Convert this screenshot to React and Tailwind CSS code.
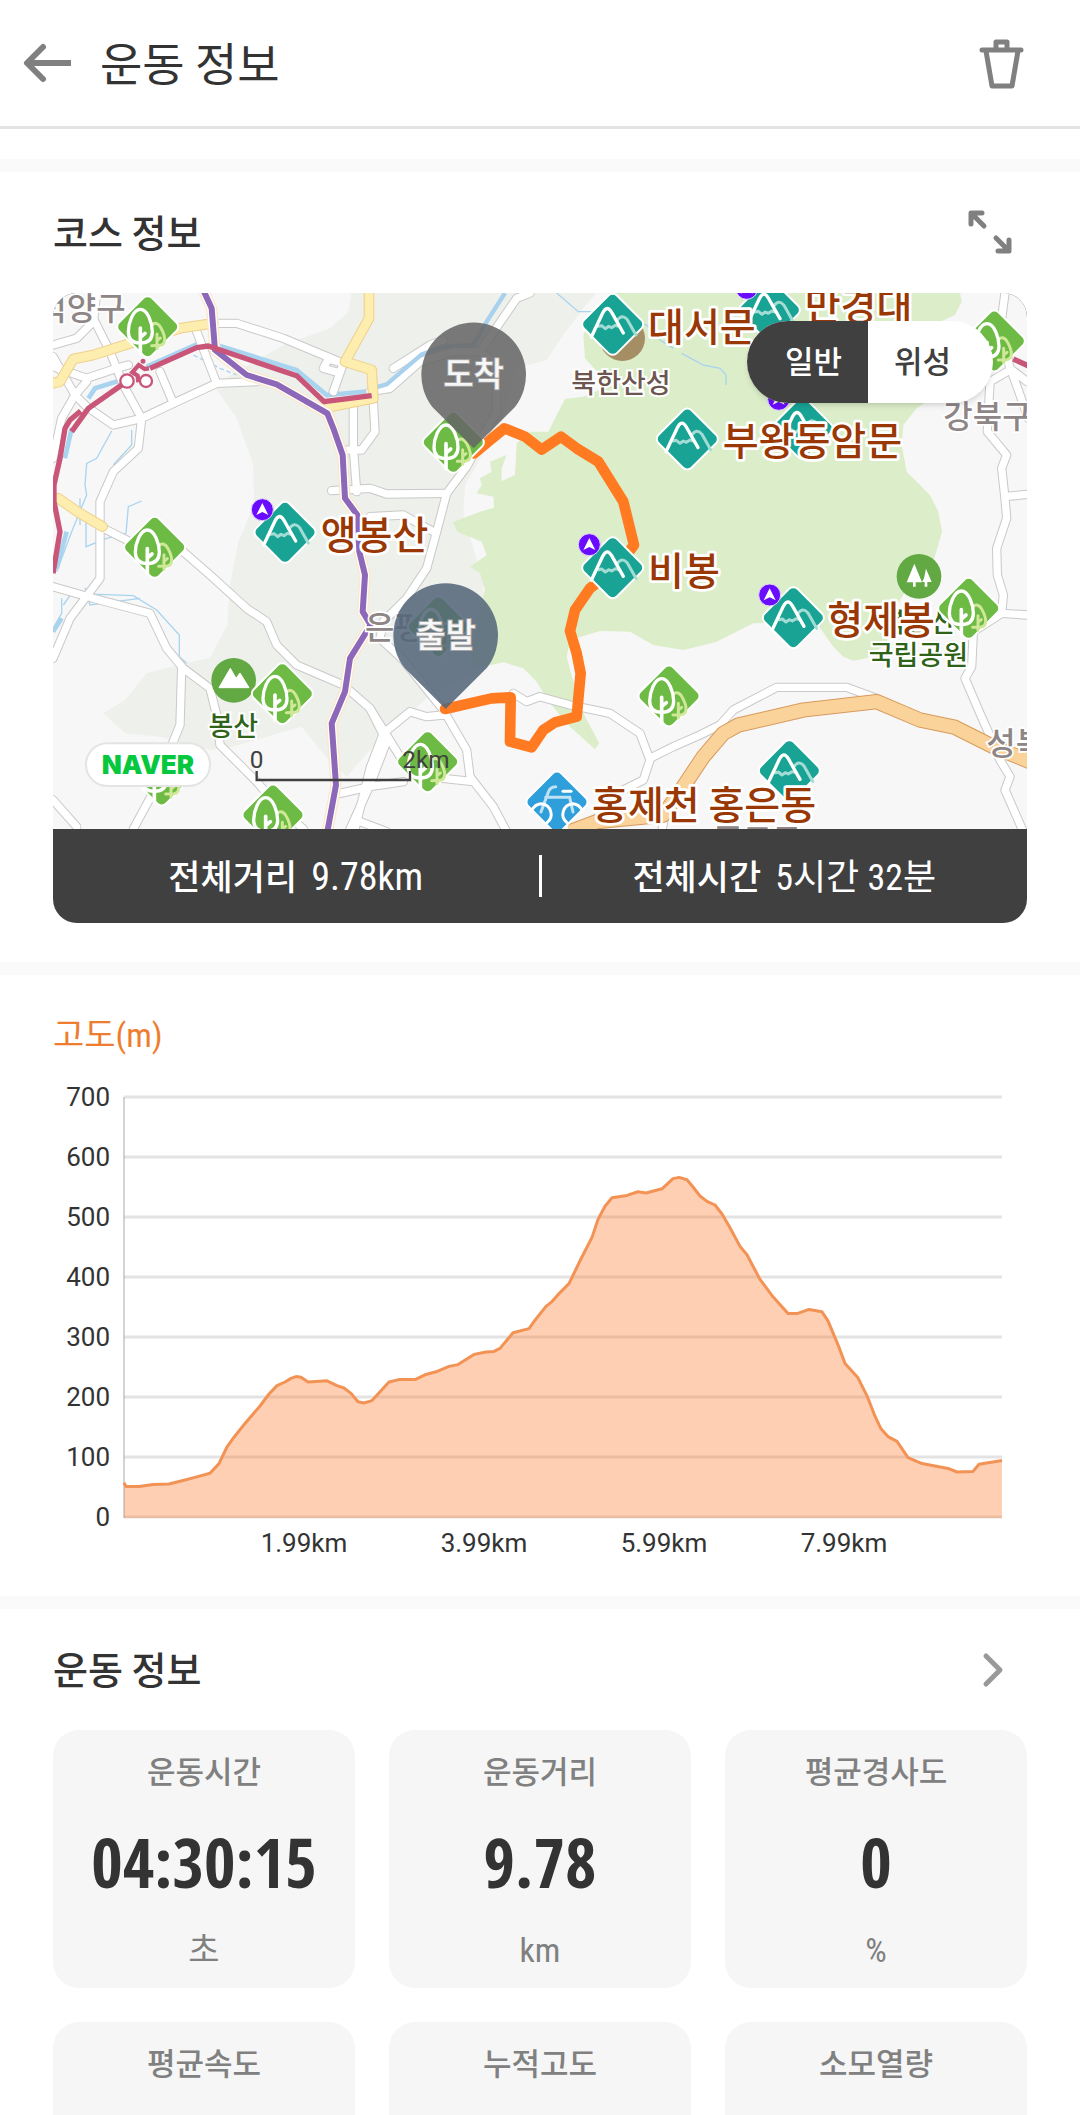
import { useState } from 'react';

const stats = [
  { label: '운동시간', value: '04:30:15', unit: '초' },
  { label: '운동거리', value: '9.78', unit: 'km' },
  { label: '평균경사도', value: '0', unit: '%' },
  { label: '평균속도' },
  { label: '누적고도' },
  { label: '소모열량' },
];

// [distance along the axis, elevation in m]
const elevation = [
  [0, 57], [2, 51], [15, 51], [29, 54], [45, 55], [57, 60], [71, 66], [86, 73], [95, 89], [103, 117],
  [110, 133], [121, 156], [136, 185], [145, 205], [153, 219], [161, 225], [167, 231], [172, 234],
  [177, 233], [184, 225], [203, 227], [213, 219], [220, 215], [227, 206], [234, 192], [240, 190],
  [248, 194], [265, 225], [275, 229], [291, 229], [301, 237], [312, 242], [325, 251], [334, 254],
  [350, 271], [362, 275], [370, 276], [376, 281], [389, 307], [405, 314], [411, 328], [422, 351],
  [428, 359], [436, 374], [445, 389], [456, 427], [468, 466], [474, 496], [481, 518], [488, 532],
  [503, 536], [514, 542], [522, 540], [538, 547], [549, 564], [555, 566], [563, 562], [569, 550],
  [576, 535], [583, 526], [591, 520], [598, 505], [606, 482], [616, 451], [623, 437], [629, 418],
  [636, 396], [649, 367], [664, 339], [673, 339], [685, 346], [698, 342], [704, 327], [714, 287],
  [721, 256], [734, 232], [743, 202], [751, 168], [757, 147], [764, 134], [773, 126], [784, 99],
  [798, 89], [824, 81], [833, 75], [849, 76], [855, 88], [878, 94],
];

const distances = ['1.99km', '3.99km', '5.99km', '7.99km'];

const roads = [
  'M9 180 L80 160 L130 110 L140 24',
  'M130 100 L180 200 L220 300 L275 400 L265 490 L190 560 L150 650 L150 880 L60 1000 L9 1120',
  'M9 215 L75 330 L110 365 L190 420 L275 400 L370 355 L500 295 L620 290',
  'M9 245 L110 280 L200 250 L235 240 M110 290 L75 330 L35 400 L9 520',
  'M370 355 L330 260 M500 295 L440 140',
  'M490 115 L560 115 L700 160 L880 235 L850 320 M880 235 L835 222 L820 250 L862 262',
  'M9 905 L130 940 L300 985 L350 1090 L400 1150 L480 1210 L500 1290 L510 1380 L620 1490 L680 1560 L760 1632',
  'M395 1150 L390 1320 L300 1540 L250 1632 M9 1545 L80 1625',
  'M160 730 L300 800 L400 800 L480 870 L590 970 L650 1010 L680 1080 L740 1140 L880 1200 L960 1270 L1010 1370 L960 1500 L900 1632',
  'M910 360 L910 490 L920 620 M970 350 L975 440 L935 495 L895 495 M845 617 L960 610 L1010 627 L1190 625',
  'M960 320 L1020 310 L1110 230 L1210 200 L1290 200 L1330 230 L1340 300 L1340 380 L1290 470 L1250 545 L1190 625 L1160 740 L1130 850 L1070 940 L1000 1010 L990 1060 L1060 1125 L1180 1275 L1250 1395 L1260 1475 L1330 1565 L1370 1640',
  'M1030 250 L1140 180 L1180 165 M1290 200 L1400 40 L1440 24',
  'M960 695 L1060 690 L1150 740',
  'M1180 1290 L1130 1295 L1080 1280 L1000 1345 L960 1450 L915 1632',
  'M960 1270 L1050 1415 L1130 1475 L1270 1490 M870 1525 L960 1505 L1060 1490 M930 1610 L1010 1640',
  'M1390 1225 L1430 1250 L1470 1235 L1560 1260 L1680 1285 L1770 1345 L1800 1425 L1780 1485 L1720 1515',
  'M1800 1420 L1870 1385 L1950 1350 L2010 1320 L2050 1275 L2180 1207 L2390 1207 L2480 1240',
  'M2865 24 L2855 100 L2880 255 L2820 290 L2812 440 L2870 510 L2855 550 L2865 640 L2870 700 L2840 790 L2842 870 L2860 930 L2855 985 L2770 1040 L2765 1145 L2745 1180 L2790 1285 L2830 1375 L2850 1425 L2880 1475 L2865 1515 L2920 1640',
  'M2880 250 L2931 290 M2885 260 L2935 400 M2865 635 L2931 628 M2855 985 L2931 990',
  'M1845 1590 L1835 1640',
];

const trees = [
  [293, 125], [314, 787], [1210, 472], [2833, 168], [697, 1226], [335, 1470],
  [669, 1590], [1133, 1430], [1857, 1233], [1165, 1025],
];

const mountains = [
  [705, 742], [1688, 118], [1688, 848], [1912, 462], [2158, 75], [2257, 430], [2230, 998], [2218, 1457],
];

const summits = [[637, 674], [1618, 779], [2186, 343], [2159, 930], [2090, 10]];

const peakNames = [
  ['앵봉산', 812, 793],
  ['대서문', 1794, 168],
  ['만경대', 2264, 104],
  ['부왕동암문', 2018, 511],
  ['비봉', 1794, 899],
  ['형제봉', 2332, 1048],
  ['홍제천 홍은동', 1626, 1603],
];

const districts = [
  ['덕양구', -38, 105],
  ['강북구', 2680, 429],
  ['은평구', 945, 1062],
  ['성북구', 2809, 1409],
  ['종로구', 1990, 1702],
];

const Diamond = ({ color }) => (
  <rect x="-70" y="-70" width="140" height="140" rx="18" transform="rotate(45)" fill={color} stroke="#fff" strokeWidth="6" />
);

const TreeMarker = ({ x, y }) => (
  <g transform={`translate(${x} ${y})`} fill="none" strokeLinecap="round">
    <Diamond color="#6dbb44" />
    <g stroke="#cfe897" strokeWidth="9">
      <path d="M13 -5 C22 -14 33 -10 40 4 C56 34 54 52 38 56 L12 57" />
      <path d="M28 22 V66 M28 42 L38 34" />
    </g>
    <path d="M-22 -52 C-44 -52 -58 -10 -58 15 C-58 40 -42 49 -22 49 C0 49 14 40 14 15 C14 -10 0 -52 -22 -52 Z" stroke="#fff" strokeWidth="10" />
    <path d="M-22 4 V80 M-22 32 L-8 20" stroke="#fff" strokeWidth="11" />
  </g>
);

const MountainMarker = ({ x, y }) => (
  <g transform={`translate(${x} ${y})`} fill="none" strokeLinecap="round" strokeLinejoin="round">
    <Diamond color="#18a395" />
    <g stroke="#a3dcd4" strokeWidth="9">
      <path d="M-42 6 L-33 4 L-22 13 L-12 6 L-3 10 L8 3 L18 6" />
      <path d="M12 -10 Q28 -34 44 -14 L70 32" />
    </g>
    <path d="M-64 38 L-30 -34 Q-17 -60 -3 -36 L32 26" stroke="#fff" strokeWidth="10" />
  </g>
);

const Pin = ({ x, y, color, label }) => (
  <g transform={`translate(${x} ${y})`}>
    <path d="M0 222 L-124 98 A157 157 0 1 1 124 98 Z" fill={color} fillOpacity="0.87" />
    <text y="36" textAnchor="middle" fontSize="98" fontWeight="500" fill="#f7f7f7" stroke="#a3a3a3" strokeWidth="6" paintOrder="stroke">
      {label}
    </text>
  </g>
);

const CourseMap = () => (
  <svg
    viewBox="9 24 2922 1608"
    className="block h-auto w-full bg-[#f7f7f7] font-['Noto_Sans_CJK_KR',sans-serif]"
    role="img"
    aria-label="코스 지도"
  >
    <path
      d="M905 24 L895 80 L840 130 L700 180 L490 300 L560 400 L610 540 L612 660 L565 770 L540 900 L532 1020 L480 1118 L385 1140 L290 1165 L225 1245 L160 1285 L225 1345 L330 1355 L480 1395 L550 1385 L700 1340 L755 1325 L840 1430 L890 1475 L960 1395 L1130 1240 L1300 1150 L1300 890 L1240 690 L1245 600 L1360 400 L1400 250 L1490 225 L1540 150 L1600 70 L1640 24 Z"
      fill="#eef0ec"
    />
    <path
      d="M1680 24 L1620 100 L1600 150 L1605 220 L1650 270 L1660 310 L1600 335 L1545 342 L1520 390 L1495 440 L1440 440 L1400 475 L1395 570 L1355 588 L1355 550 L1370 510 L1320 530 L1325 560 L1290 580 L1295 600 L1280 625 L1330 635 L1332 668 L1290 680 L1208 712 L1222 740 L1295 770 L1310 810 L1260 845 L1290 865 L1305 915 L1285 975 L1270 1065 L1260 1115 L1280 1150 L1360 1132 L1420 1150 L1460 1190 L1500 1255 L1560 1325 L1635 1393 L1648 1375 L1600 1285 L1560 1155 L1550 1115 L1560 1065 L1650 1038 L1740 1040 L1810 1080 L1900 1095 L1950 1083 L2000 1070 L2110 1015 L2240 1010 L2300 1015 L2350 1085 L2380 1115 L2410 1127 L2450 1120 L2510 1075 L2530 980 L2600 860 L2650 830 L2676 740 L2665 680 L2640 630 L2570 560 L2555 480 L2560 420 L2600 370 L2630 350 L2640 200 L2670 110 L2715 90 L2735 50 L2730 24 Z"
      fill="#dcedc9"
    />

    <g fill="none" stroke="#a9d4f0" strokeWidth="4">
      <path d="M185 438 L140 520 L110 535 L105 600 L110 630 L65 740 L20 860 M245 435 V480 L190 540 M275 648 L235 665 L228 745 L170 760 L108 785 V690 M90 720 V640" />
      <path d="M40 960 L75 910 M105 908 L120 960 L270 940 M60 925 L250 932 L320 975 L388 1050 V1115 L410 1135 M9 1030 L35 985 V940" />
      <path d="M430 210 L510 250 L560 270" strokeDasharray="14 8" />
      <path d="M1520 24 L1585 80 L1660 80 L1790 120 L1830 165 L1870 190 M1895 205 L1960 240 L2010 250 L2028 270 V300" />
    </g>
    <g fill="none" stroke="#a9d4f0" strokeWidth="14">
      <path d="M115 340 L135 310 L215 285 M290 245 L440 178 M500 180 L740 255 L830 330 L1000 315" />
      <path d="M65 430 L45 520 M50 740 L20 850 M9 1040 L35 1000" />
    </g>

    <g fill="none" strokeLinejoin="round" strokeLinecap="round">
      <g stroke="#c9c9c9" strokeWidth="28">
        {roads.map((d) => <path key={d} d={d} />)}
      </g>
      <g stroke="#fff" strokeWidth="22">
        {roads.map((d) => <path key={d} d={d} />)}
      </g>
    </g>
    <path d="M975 308 L1010 298 L1115 208 L1180 185 L1270 180 L1310 110 L1365 24" fill="none" stroke="#a9d0ec" strokeWidth="13" />

    {[['#eed08a', 32], ['#fdeeb0', 26]].map(([color, width]) => (
      <path
        key={color}
        d="M9 295 L30 290 L70 222 L130 210 L240 175 L390 130 L490 115 M957 24 L957 100 L885 230 L965 255 L970 340 L835 367 M25 640 L90 685 L158 725"
        fill="none"
        stroke={color}
        strokeWidth={width}
        strokeLinejoin="round"
        strokeLinecap="round"
      />
    ))}
    {[['#d99a5c', 46], ['#f9d39a', 40]].map(([color, width]) => (
      <path
        key={color}
        d="M1560 1640 L1640 1610 L1840 1590 L1890 1520 L1960 1415 L2020 1345 L2065 1320 L2260 1275 L2480 1250 L2610 1305 L2715 1327 L2830 1385 L2940 1430"
        fill="none"
        stroke={color}
        strokeWidth={width}
        strokeLinejoin="round"
      />
    ))}

    <g fill="none" strokeLinejoin="round">
      {[['#fbe8cc', 34], ['#fff', 26], ['#8e68b8', 18]].map(([color, width]) => (
        <path
          key={color}
          d="M462 20 L485 70 L495 195 L590 270 L680 298 L832 385 L850 430 L878 510 L885 640 L922 690 L928 800 L945 870 L938 980 L962 1020 L900 1120 L885 1220 L845 1315 L858 1500 L832 1640"
          stroke={color}
          strokeWidth={width}
        />
      ))}
      <path
        d="M9 865 L30 740 L12 650 L12 600 L30 520 L45 430 L60 405 L92 378 M65 440 L115 370 L215 300 M300 250 L440 188 L475 183 L740 272 L822 350 L965 332 M2890 222 L2940 245"
        stroke="#c95578"
        strokeWidth="16"
      />
    </g>

    {/* riverside bike path symbol */}
    <g stroke="#c95578" fill="none" strokeWidth="7">
      <circle cx="231" cy="288" r="20" fill="#fff" />
      <circle cx="288" cy="288" r="18" fill="#fff" />
      <path d="M265 292 L263 272 L247 262 L266 240 L284 252 L297 250" strokeWidth="13" />
      <circle cx="279" cy="229" r="4" />
    </g>

    <g fontSize="96" fontWeight="500" fill="#8e8686" stroke="#fff" strokeWidth="10" paintOrder="stroke">
      {districts.map(([name, x, y]) => <text key={name} x={x} y={y}>{name}</text>)}
    </g>

    <circle cx="1717" cy="160" r="68" fill="#a68e64" />
    <text x="1713" y="323" textAnchor="middle" fontSize="81" fontWeight="500" fill="#6d5650" stroke="#fff" strokeWidth="12" paintOrder="stroke">북한산성</text>

    <circle cx="2607" cy="874" r="67" fill="#63a943" />
    <path d="M2593 836 L2616 892 H2597 V905 H2589 V892 H2570 Z M2628 851 L2645 891 H2632 V905 H2624 V891 H2616 L2622 880 Z" fill="#fff" />
    <circle cx="551" cy="1186" r="67" fill="#63a943" />
    <path d="M507 1208 L541 1150 L558 1180 L570 1164 L597 1208 Z" fill="#fff" stroke="#fff" strokeWidth="3" strokeLinejoin="round" />
    <g fontSize="81" fontWeight="500" fill="#2f6318" stroke="#fff" strokeWidth="12" paintOrder="stroke" textAnchor="middle">
      <text x="550" y="1353">봉산</text>
      <text x="2605" y="1040">북한산</text>
      <text x="2605" y="1141">국립공원</text>
    </g>

    <path
      d="M1272 505 L1363 430 L1425 455 L1475 494 L1533 455 L1580 490 L1645 530 L1720 650 L1752 780 L1700 850 L1620 910 L1575 975 L1560 1038 L1580 1105 L1592 1165 L1580 1295 L1515 1312 L1480 1335 L1445 1387 L1380 1370 L1382 1237 L1325 1240 L1185 1272"
      fill="none"
      stroke="#ff7a20"
      strokeWidth="32"
      strokeLinejoin="round"
      strokeLinecap="round"
    />

    {trees.map(([x, y]) => <TreeMarker key={`${x}-${y}`} x={x} y={y} />)}
    {mountains.map(([x, y]) => <MountainMarker key={`${x}-${y}`} x={x} y={y} />)}
    <TreeMarker x={2756} y={970} />

    <g transform="translate(1521 1551)" fill="none" strokeLinecap="round">
      <Diamond color="#2e9fda" />
      <g stroke="#bfe3f5" strokeWidth="9">
        <path d="M-48 30 L-26 -30 Q-20 -46 -4 -46 M-34 -14 H38 L48 30" />
        <path d="M18 -32 H42" stroke="#fff" />
      </g>
      <path d="M-78 28 Q-66 5 -46 5 A32 32 0 0 1 -30 62 M78 28 Q66 5 46 5 A32 32 0 0 0 30 62" stroke="#fff" strokeWidth="9" />
    </g>

    {summits.map(([x, y]) => (
      <g key={`${x}-${y}`} transform={`translate(${x} ${y})`}>
        <circle r="33" fill="#6a0dff" stroke="#e3d6ff" strokeWidth="3" />
        <path d="M0 -20 L18 16 L0 7 L-18 16 Z" fill="#fff" />
      </g>
    ))}

    <g fontSize="117" fontWeight="500" fill="#993804" stroke="#fff" strokeWidth="16" strokeLinejoin="round" paintOrder="stroke">
      {peakNames.map(([name, x, y]) => <text key={name} x={x} y={y}>{name}</text>)}
    </g>

    <Pin x={1271} y={268} color="#666666" label="도착" />
    <Pin x={1187} y={1050} color="#54667a" label="출발" />

    <rect x="108" y="1375" width="372" height="128" rx="64" fill="#fff" stroke="#e4e4e4" strokeWidth="6" />
    <text x="294" y="1467" textAnchor="middle" fontSize="78" fontWeight="900" fill="#06c83f" className="font-['Inter',sans-serif]">NAVER</text>
    <g fill="#404040" fontSize="73" textAnchor="middle" className="font-['Roboto',sans-serif]">
      <path d="M620 1458 V1485 H1080 V1458" fill="none" stroke="#404040" strokeWidth="7" />
      <text x="620" y="1450">0</text>
      <text x="1128" y="1450">2km</text>
    </g>
  </svg>
);

const ElevationChart = () => {
  const line = elevation.map(([x, m]) => `${71 + x},${458 - m * 0.6}`).join(' ');
  return (
    <svg
      viewBox="0 0 974 537"
      className="block h-auto w-full font-['Roboto',sans-serif]"
      role="img"
      aria-label="고도 그래프"
    >
      {[700, 600, 500, 400, 300, 200, 100, 0].map((m) => (
        <g key={m}>
          <line x1="71" x2="949" y1={458 - m * 0.6} y2={458 - m * 0.6} stroke="#e3e3e3" strokeWidth="3" />
          <text x="57" y={467 - m * 0.6} textAnchor="end" fontSize="26" fill="#333">{m}</text>
        </g>
      ))}
      <line x1="71" x2="71" y1="38" y2="459" stroke="#a8a8a8" strokeWidth="1" />
      <polygon points={`71,459 ${line} 949,459`} fill="#ff7626" fillOpacity="0.35" />
      <polyline points={line} fill="none" stroke="#f29355" strokeWidth="3" strokeLinejoin="round" />
      {distances.map((label, i) => (
        <text key={label} x={251 + i * 180} y="493" textAnchor="middle" fontSize="26" fill="#333">{label}</text>
      ))}
    </svg>
  );
};

const StatCard = ({ label, value, unit }) => (
  <div className="flex h-[258px] flex-col items-center rounded-[26px] bg-[#f6f6f6] pt-4 text-[#808080]">
    <p className="text-[31px] leading-12 font-medium">{label}</p>
    <p className="mt-6 font-['Open_Sans_Condensed',sans-serif] text-[68px] leading-[88px] font-bold text-[#333]">{value}</p>
    <p className="mt-5 font-['Roboto_Condensed','Noto_Sans_CJK_KR',sans-serif] text-[34px] leading-12">{unit}</p>
  </div>
);

const Divider = () => <div className="h-[13px] shrink-0 bg-[#fafafa]" />;

export default function App() {
  const [mapType, setMapType] = useState('일반');

  return (
    <div className="flex h-dvh flex-col overflow-hidden bg-white font-['Noto_Sans_CJK_KR',sans-serif] text-[#333]">
      <header className="flex h-[129px] shrink-0 items-center border-b-[3px] border-[#e3e3e3] pr-[53px] pl-5">
        <button type="button" aria-label="뒤로" className="mr-6">
          <svg width="56" height="48" viewBox="0 0 56 48" fill="none" stroke="#808080" strokeWidth="6">
            <path d="M51 24 H8" />
            <path d="M23 8 L7 24 L23 40" strokeLinecap="round" strokeLinejoin="round" />
          </svg>
        </button>
        <h1 className="flex-1 pb-1 text-[46px] leading-16">운동 정보</h1>
        <button type="button" aria-label="삭제">
          <svg width="50" height="54" viewBox="0 0 50 54" fill="none" stroke="#808080" strokeWidth="5" strokeLinecap="round" strokeLinejoin="round">
            <path d="M5 14 H44 M19 13 V6 H30 V13 M9 15 L15 50 H35 L41 15" />
          </svg>
        </button>
      </header>

      <main className="flex-1 overflow-y-auto pt-[30px] [scrollbar-width:none]">
        <Divider />
        <section className="px-[53px] pb-[39px]">
          <div className="flex h-[121px] items-center justify-between pr-3">
            <h2 className="pb-1 text-[38px] leading-14 font-medium">코스 정보</h2>
            <button type="button" aria-label="지도 확대">
              <svg width="50" height="50" viewBox="0 0 50 50" fill="none" stroke="#808080" strokeWidth="5" strokeLinecap="round" strokeLinejoin="round">
                <path d="M19 18 L7 6 M6 16 V5 H17 M31 30 L43 42 M44 32 V43 H33" />
              </svg>
            </button>
          </div>
          <div className="relative overflow-hidden rounded-3xl bg-[#404040]">
            <CourseMap />
            <div className="absolute top-7 right-[34px] flex h-[82px] w-[246px] overflow-hidden rounded-full bg-white text-[31px] font-medium shadow-md">
              {['일반', '위성'].map((type) => (
                <button
                  key={type}
                  type="button"
                  aria-pressed={mapType === type}
                  onClick={() => setMapType(type)}
                  className={mapType === type ? 'flex-1 bg-[#404040] pb-1 pl-3 text-white' : 'flex-1 pr-4 pb-1 text-[#404040]'}
                >
                  {type}
                </button>
              ))}
            </div>
            <dl className="flex h-[94px] items-center font-['Roboto_Condensed','Noto_Sans_CJK_KR',sans-serif] leading-12 text-white">
              <div className="flex flex-1 items-baseline justify-center gap-3.5 pt-1">
                <dt className="text-[35px] font-medium">전체거리</dt>
                <dd className="text-[38px]">9.78km</dd>
              </div>
              <div className="h-[42px] w-[3px] bg-white" />
              <div className="flex flex-1 items-baseline justify-center gap-3.5 pt-1">
                <dt className="text-[35px] font-medium">전체시간</dt>
                <dd className="text-[36px]">5시간 32분</dd>
              </div>
            </dl>
          </div>
        </section>

        <Divider />
        <section className="px-[53px] pt-9">
          <h2 className="font-['Roboto_Condensed','Noto_Sans_CJK_KR',sans-serif] text-[34px] leading-12 text-[#ee7d30]">고도(m)</h2>
          <ElevationChart />
        </section>

        <Divider />
        <section className="px-[53px] pb-10">
          <div className="flex h-[121px] items-center justify-between pr-4">
            <h2 className="pb-1 text-[38px] leading-14 font-medium">운동 정보</h2>
            <button type="button" aria-label="자세히">
              <svg width="36" height="44" viewBox="0 0 36 44" fill="none" stroke="#999" strokeWidth="5" strokeLinecap="round" strokeLinejoin="round">
                <path d="M11 8 L25 22 L11 36" />
              </svg>
            </button>
          </div>
          <div className="grid grid-cols-3 gap-[34px]">
            {stats.map((stat) => <StatCard key={stat.label} {...stat} />)}
          </div>
        </section>
      </main>
    </div>
  );
}
